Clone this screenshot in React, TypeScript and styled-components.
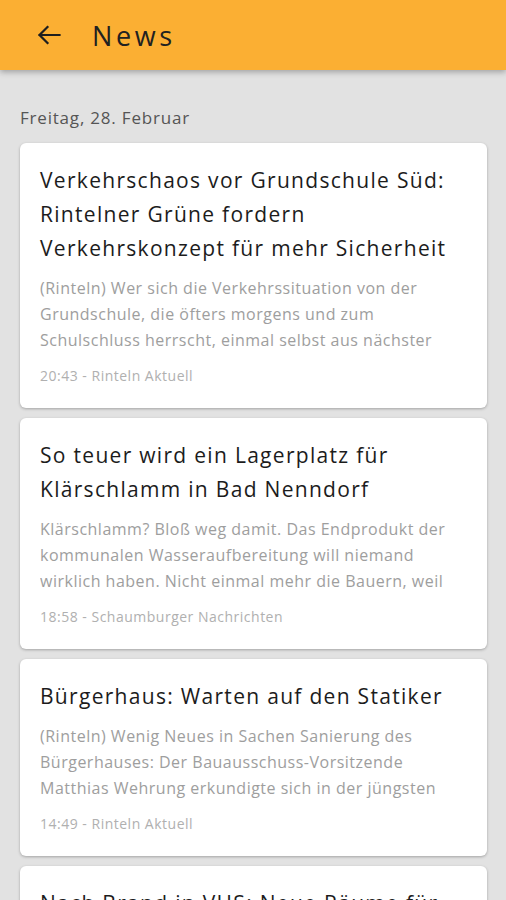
import styled, { createGlobalStyle } from "styled-components";

const GlobalStyle = createGlobalStyle`
  html, body {
    margin: 0;
    padding: 0;
    background: #e2e2e2;
    font-family: "Open Sans", "Liberation Sans", sans-serif;
  }
`;

type NewsItem = {
  title: string;
  teaser: string;
  time: string;
  source: string;
};

const items: NewsItem[] = [
  {
    title: "Verkehrschaos vor Grundschule Süd: Rintelner Grüne fordern Verkehrskonzept für mehr Sicherheit",
    teaser:
      "(Rinteln) Wer sich die Verkehrssituation von der Grundschule, die öfters morgens und zum Schulschluss herrscht, einmal selbst aus nächster",
    time: "20:43",
    source: "Rinteln Aktuell",
  },
  {
    title: "So teuer wird ein Lagerplatz für Klärschlamm in Bad Nenndorf",
    teaser:
      "Klärschlamm? Bloß weg damit. Das Endprodukt der kommunalen Wasseraufbereitung will niemand wirklich haben. Nicht einmal mehr die Bauern, weil",
    time: "18:58",
    source: "Schaumburger Nachrichten",
  },
  {
    title: "Bürgerhaus: Warten auf den Statiker",
    teaser:
      "(Rinteln) Wenig Neues in Sachen Sanierung des Bürgerhauses: Der Bauausschuss-Vorsitzende Matthias Wehrung erkundigte sich in der jüngsten",
    time: "14:49",
    source: "Rinteln Aktuell",
  },
  {
    title: "Nach Brand in VHS: Neue Räume für Kurse gesucht",
    teaser: "(Rinteln) Nach dem Brand in der Volkshochschule werden neue Räume gesucht.",
    time: "11:02",
    source: "Rinteln Aktuell",
  },
];

function BackArrow() {
  return (
    <svg width="24" height="20" viewBox="0 0 24 20" aria-hidden="true">
      <path
        d="M22.5 10H2.5M10.5 2L2.5 10l8 8"
        fill="none"
        stroke="#1e1e1e"
        strokeWidth="2.2"
        strokeLinecap="square"
      />
    </svg>
  );
}

export default function App() {
  return (
    <>
      <GlobalStyle />
      <Screen>
        <AppBar>
          <IconButton aria-label="Zurück">
            <BackArrow />
          </IconButton>
          <BarTitle>News</BarTitle>
        </AppBar>
        <Feed>
          <DayLabel>Freitag, 28. Februar</DayLabel>
          {items.map((item) => (
            <Card key={item.title}>
              <Title>{item.title}</Title>
              <Teaser>{item.teaser}</Teaser>
              <Meta>
                {item.time} - {item.source}
              </Meta>
            </Card>
          ))}
        </Feed>
      </Screen>
    </>
  );
}

const Screen = styled.div`
  height: 900px;
  overflow: hidden;
  background: #e2e2e2;
`;

const AppBar = styled.header`
  height: 70px;
  background: #fbaf33;
  display: flex;
  align-items: center;
  padding: 0 0 0 25px;
  box-shadow: 0 2px 6px rgba(0, 0, 0, 0.3);
  position: relative;
  z-index: 1;
`;

const IconButton = styled.button`
  width: 48px;
  height: 48px;
  border: 0;
  padding: 0;
  background: none;
  display: flex;
  align-items: center;
  justify-content: center;
  margin-right: 19px;
`;

const BarTitle = styled.h1`
  margin: 0;
  font-size: 27px;
  font-weight: 400;
  letter-spacing: 3.6px;
  color: #212121;
`;

const Feed = styled.main`
  display: flex;
  flex-direction: column;
  gap: 10px;
  padding: 36px 19px 0 20px;
`;

const DayLabel = styled.div`
  font-size: 17px;
  line-height: 24px;
  color: #555;
  letter-spacing: 0.8px;
  margin-bottom: 3px;
`;

const Card = styled.article`
  background: #fff;
  border-radius: 6px;
  box-shadow: 0 1px 3px rgba(0, 0, 0, 0.28);
  padding: 20px 20px 22px;
  display: flex;
  flex-direction: column;
`;

const Title = styled.h2`
  margin: 0;
  font-size: 21px;
  line-height: 34px;
  font-weight: 400;
  letter-spacing: 1.3px;
  color: #1c1c1c;
`;

const Teaser = styled.p`
  margin: 10px 0 0;
  font-size: 16px;
  line-height: 26px;
  max-height: 78px;
  overflow: hidden;
  color: #9e9e9e;
  letter-spacing: 0.5px;
`;

const Meta = styled.div`
  margin-top: 13px;
  font-size: 14px;
  line-height: 20px;
  color: #b0b0b0;
  letter-spacing: 0.5px;
`;
